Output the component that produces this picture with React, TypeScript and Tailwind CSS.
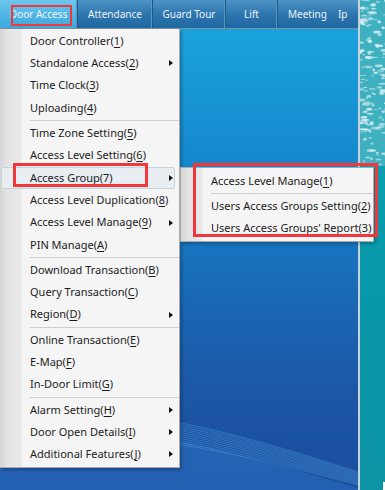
import React from "react";

type MenuEntry = { label: string; key?: string; arrow?: boolean; active?: boolean } | "sep";

const mainMenu: MenuEntry[] = [
  { label: "Door Controller", key: "1" },
  { label: "Standalone Access", key: "2", arrow: true },
  { label: "Time Clock", key: "3" },
  { label: "Uploading", key: "4" },
  "sep",
  { label: "Time Zone Setting", key: "5" },
  { label: "Access Level Setting", key: "6" },
  { label: "Access Group", key: "7", arrow: true, active: true },
  { label: "Access Level Duplication", key: "8" },
  { label: "Access Level Manage", key: "9", arrow: true },
  { label: "PIN Manage", key: "A" },
  "sep",
  { label: "Download Transaction", key: "B" },
  { label: "Query Transaction", key: "C" },
  { label: "Region", key: "D", arrow: true },
  "sep",
  { label: "Online Transaction", key: "E" },
  { label: "E-Map", key: "F" },
  { label: "In-Door Limit", key: "G" },
  "sep",
  { label: "Alarm Setting", key: "H", arrow: true },
  { label: "Door Open Details", key: "I", arrow: true },
  { label: "Additional Features", key: "J", arrow: true },
];

const subMenu: MenuEntry[] = [
  { label: "Access Level Manage", key: "1" },
  "sep",
  { label: "Users Access Groups Setting", key: "2" },
  { label: "Users Access Groups' Report", key: "3" },
];

const tabs = [
  { name: "Door Access", w: "w-[78px]", active: true },
  { name: "Attendance", w: "w-[75px]" },
  { name: "Guard Tour", w: "w-[73px]" },
  { name: "Lift", w: "w-[52px]" },
];

function MenuList({ items }: { items: MenuEntry[] }) {
  return (
    <>
      {items.map((it, i) =>
        it === "sep" ? (
          <div key={i} className="ml-[30px] my-[1px] h-[1px] bg-[#cfcfcf]" />
        ) : (
          <div
            key={i}
            className={`h-[22.3px] ml-[1px] mr-[4px] flex items-center pl-[28px] border rounded-[2px] whitespace-nowrap ${
              it.active ? "border-[#c9d3dc] bg-[#e7edf1]" : "border-transparent"
            }`}
          >
            <span>
              {it.label}(<span className="underline underline-offset-[2px]">{it.key}</span>)
            </span>
            {it.arrow && (
              <span className="ml-auto mr-[1px] w-0 h-0 border-y-[3.5px] border-y-transparent border-l-[4px] border-l-[#111]" />
            )}
          </div>
        )
      )}
    </>
  );
}

// speckled water texture, top right corner
function Water() {
  const dots: number[][] = [];
  let s = 7;
  const rnd = () => {
    s = (s * 9301 + 49297) % 233280;
    return s / 233280;
  };
  for (let i = 0; i < 140; i++) {
    dots.push([rnd() * 26, rnd() * 166, 1 + rnd() * 3.5, 0.5 + rnd() * 1.2, 0.35 + rnd() * 0.5]);
  }
  return (
    <svg width="25" height="490" viewBox="0 0 25 490" className="block">
      <defs>
        <linearGradient id="teal" x1="0" y1="0" x2="0" y2="1">
          <stop offset="0" stopColor="#0aa8b8" />
          <stop offset="0.5" stopColor="#089aab" />
          <stop offset="1" stopColor="#0c93a4" />
        </linearGradient>
      </defs>
      <rect width="25" height="490" fill="url(#teal)" />
      <rect width="25" height="166" fill="#3fb0c0" />
      {dots.map(([x, y, rx, ry, o], i) => (
        <ellipse key={i} cx={x} cy={y} rx={rx} ry={ry} fill="#e6f6f7" opacity={o} />
      ))}
      <rect x="23" y="482" width="2" height="8" fill="#ffffff" />
    </svg>
  );
}

function Waves() {
  return (
    <svg width="358" height="110" viewBox="0 0 358 110" className="absolute left-0 bottom-0">
      <path d="M0 50 C 90 35, 200 62, 358 108 L358 110 L0 110 Z" fill="#3a8ee0" opacity="0.3" />
      {[0, 2, 4, 6, 8, 10, 12, 14, 16, 18, 20, 22].map((d, i) => (
        <path
          key={i}
          d={`M0 ${38 + d} C 90 ${18 + d * 1.2}, 200 ${40 + d}, 358 ${92 + d * 0.6}`}
          fill="none"
          stroke="#5db2f2"
          strokeWidth="0.8"
          opacity={0.45}
        />
      ))}
    </svg>
  );
}

export default function App() {
  return (
    <div
      className="w-[385px] h-[490px] relative overflow-hidden flex text-[11px] text-[#1b1b1b]"
      style={{ fontFamily: '"Noto Sans", "Open Sans", sans-serif' }}
    >
      <div className="w-[358px] flex flex-col">
        <div className="h-[29px] flex bg-[linear-gradient(to_bottom,#4d93c6,#2b74ad_55%,#1f68a1)] border-b border-[#7c8f9e] text-[10px] text-[#eef4fa]">
          {tabs.map((t) => (
            <div
              key={t.name}
              className={`${t.w} h-full flex items-center justify-center border-r border-r-[#1e5886] shadow-[inset_-1px_0_0_#5a96c2] ${
                t.active ? "bg-[linear-gradient(to_bottom,#6cc6ee,#3aa8dc)]" : ""
              }`}
            >
              {t.name}
            </div>
          ))}
          <div className="flex-1 h-full flex items-center pl-[10px] gap-[11px]">
            <span>Meeting</span>
            <span>Ip</span>
          </div>
        </div>
        <div className="flex-1 relative bg-[linear-gradient(to_bottom,#1aa3dd,#1587cd_30%,#196bb8_55%,#1c56a5_80%,#1b4c9d)]">
          <Waves />
        </div>
      </div>
      <div className="w-[2px] bg-[#c9d2da]" />
      <Water />

      <div className="absolute left-0 top-[29px] w-[180px] pt-[1px] pb-[1px] border-r border-b border-[#a9a9a9] shadow-[2px_2px_3px_rgba(0,0,0,0.25)] bg-[linear-gradient(to_right,#d5d5d5_0px,#e4e4e4_8px,#e9e9e9_21px,#f5f5f5_22px)]">
        <MenuList items={mainMenu} />
      </div>

      <div className="absolute left-[180px] top-[167px] w-[194px] pt-[2px] pb-[1px] border border-[#a9a9a9] shadow-[2px_2px_3px_rgba(0,0,0,0.25)] bg-[linear-gradient(to_right,#d5d5d5_0px,#e4e4e4_8px,#e9e9e9_21px,#f5f5f5_22px)]">
        <MenuList items={subMenu} />
      </div>

      <div className="absolute left-[11px] top-[5px] w-[61px] h-[21px] border-[2.5px] border-[#f2373b] pointer-events-none" />
      <div className="absolute left-[13px] top-[163px] w-[135px] h-[24px] border-[3px] border-[#f2373b] pointer-events-none" />
      <div className="absolute left-[193px] top-[163px] w-[185px] h-[74px] border-[3px] border-[#f2373b] pointer-events-none" />
    </div>
  );
}
